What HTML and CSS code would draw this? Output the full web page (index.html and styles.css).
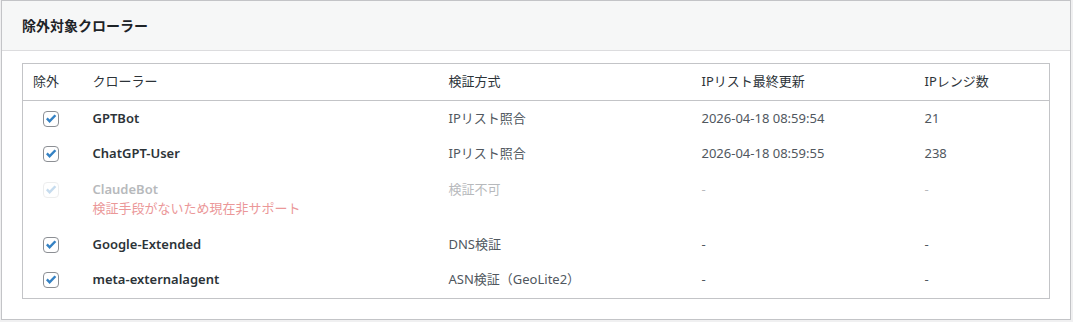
FILE: index.html
```html
<!DOCTYPE html>
<html lang="ja">
<head>
<meta charset="utf-8">
<link rel="stylesheet" href="styles.css">
</head>
<body>
<div class="card">
  <div class="card-head"><h2 class="card-title">除外対象クローラー</h2></div>
  <div class="card-body">
    <table class="crawlers">
      <colgroup>
        <col class="c-check"><col class="c-name"><col class="c-method"><col class="c-date"><col class="c-count">
      </colgroup>
      <thead>
        <tr><th>除外</th><th>クローラー</th><th>検証方式</th><th>IPリスト最終更新</th><th>IPレンジ数</th></tr>
      </thead>
      <tbody>
        <tr>
          <td><span class="cb"><svg viewBox="0 0 16 16"><path d="M3 8.2 L4.7 6.6 L6.6 8.6 L11.5 3.4 L13.3 5 L6.6 12.1 Z"/></svg></span></td>
          <td class="name">GPTBot</td><td>IPリスト照合</td><td>2026-04-18 08:59:54</td><td>21</td>
        </tr>
        <tr>
          <td><span class="cb"><svg viewBox="0 0 16 16"><path d="M3 8.2 L4.7 6.6 L6.6 8.6 L11.5 3.4 L13.3 5 L6.6 12.1 Z"/></svg></span></td>
          <td class="name">ChatGPT-User</td><td>IPリスト照合</td><td>2026-04-18 08:59:55</td><td>238</td>
        </tr>
        <tr class="disabled">
          <td><span class="cb"><svg viewBox="0 0 16 16"><path d="M3 8.2 L4.7 6.6 L6.6 8.6 L11.5 3.4 L13.3 5 L6.6 12.1 Z"/></svg></span></td>
          <td class="name">ClaudeBot<span class="note">検証手段がないため現在非サポート</span></td><td>検証不可</td><td>-</td><td>-</td>
        </tr>
        <tr>
          <td><span class="cb"><svg viewBox="0 0 16 16"><path d="M3 8.2 L4.7 6.6 L6.6 8.6 L11.5 3.4 L13.3 5 L6.6 12.1 Z"/></svg></span></td>
          <td class="name">Google-Extended</td><td>DNS検証</td><td>-</td><td>-</td>
        </tr>
        <tr>
          <td><span class="cb"><svg viewBox="0 0 16 16"><path d="M3 8.2 L4.7 6.6 L6.6 8.6 L11.5 3.4 L13.3 5 L6.6 12.1 Z"/></svg></span></td>
          <td class="name">meta-externalagent</td><td>ASN検証（GeoLite2）</td><td>-</td><td>-</td>
        </tr>
      </tbody>
    </table>
  </div>
</div>
</body>
</html>
```
FILE: styles.css
```css
html, body {
  margin: 0;
  padding: 0;
  background: #f0f0f1;
}
body {
  padding: 0 2px 0 1px;
  font-family: "Noto Sans", "Noto Sans CJK JP", sans-serif;
  font-size: 13px;
  line-height: 1.5;
  color: #3c434a;
}
.card {
  background: #fff;
  border: 1px solid #c3c4c7;
  box-sizing: border-box;
  height: 320px;
}
.card-head {
  background: #f6f7f7;
  border-bottom: 1px solid #dcdcde;
  height: 49px;
  display: flex;
  align-items: center;
  padding: 0 20px;
}
.card-title {
  margin: 0;
  font-size: 14px;
  font-weight: 600;
  color: #1d2327;
  line-height: 1.4;
}
.card-body {
  padding: 12px 20px 20px;
}
.crawlers {
  width: 100%;
  border: 1px solid #c3c4c7;
  border-collapse: collapse;
  table-layout: fixed;
}
.c-check { width: 60px; }
.c-name { width: 356px; }
.c-method { width: 253px; }
.c-date { width: 223px; }
.c-count { width: auto; }
.crawlers th {
  text-align: left;
  font-weight: 400;
  color: #2c3338;
  padding: 8px 10px;
  height: 19px;
  border-bottom: 1px solid #c3c4c7;
}
.crawlers td {
  padding: 8px 10px;
  vertical-align: top;
  color: #50575e;
}
.crawlers td.name {
  font-weight: 600;
  color: #2c3338;
}
.note {
  display: block;
  font-weight: 400;
  color: #d63638;
}
.disabled {
  opacity: 0.62;
}
.disabled td, .disabled td.name {
  color: #8c8f94;
}
.disabled .note {
  color: #e0585a;
}
.disabled .cb {
  opacity: 0.45;
  border-color: #c3c4c7;
}
.cb {
  display: block;
  box-sizing: border-box;
  width: 16px;
  height: 16px;
  margin: 2px 0 0 10px;
  border: 1px solid #8c8f94;
  border-radius: 4px;
  background: #fff;
}
.cb svg {
  display: block;
  width: 16px;
  height: 16px;
  margin: -1px 0 0 -1px;
  fill: #3582c4;
}
```
